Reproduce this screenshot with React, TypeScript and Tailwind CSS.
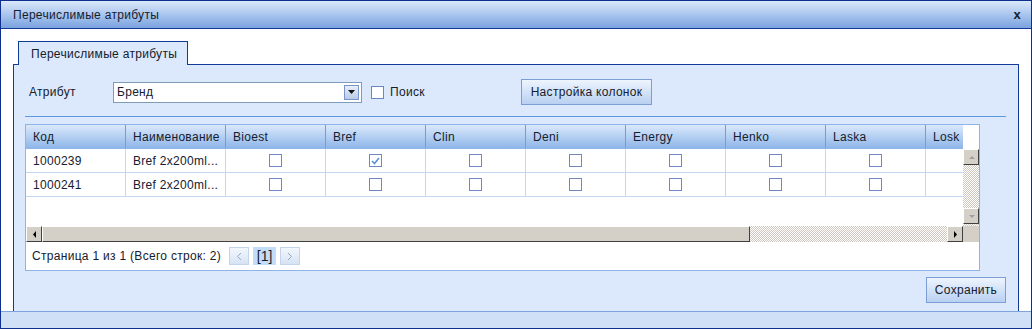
import React from "react";

const font = "font-['Tahoma','Liberation_Sans','DejaVu_Sans',sans-serif] tracking-[0.3px]";

const brands = ["Bioest", "Bref", "Clin", "Deni", "Energy", "Henko", "Laska", "Losk"];

const rows = [
  { code: "1000239", name: "Bref 2x200ml...", checked: "Bref" },
  { code: "1000241", name: "Bref 2x200ml...", checked: "" },
];

function Check({ on }: { on: boolean }) {
  return (
    <div className="w-[13px] h-[13px] border border-[#7088c4] bg-white flex items-center justify-center">
      {on && (
        <svg width="9" height="8" viewBox="0 0 9 8">
          <path d="M1 4 L3.5 6.5 L8 1" stroke="#5b8fe0" strokeWidth="1.6" fill="none" />
        </svg>
      )}
    </div>
  );
}

function ScrollBtn({ dir }: { dir: "up" | "down" | "left" | "right" }) {
  const pts = {
    up: "2,6 5,3 8,6",
    down: "2,3 5,6 8,3",
    left: "6,1 3,4.5 6,8",
    right: "3,1 6,4.5 3,8",
  }[dir];
  const dark = dir === "left" || dir === "right";
  return (
    <div className="w-[16px] h-[16px] shrink-0 bg-[#d4d0c8] border border-t-white border-l-white border-r-[#404040] border-b-[#404040] flex items-center justify-center">
      <svg width="9" height="9" viewBox="0 0 9 9">
        <polygon points={pts} fill={dark ? "#000" : "#a0a0a0"} />
      </svg>
    </div>
  );
}

const checker =
  "bg-[repeating-conic-gradient(#cdc9c1_0%_25%,#ffffff_0%_50%)] bg-[length:2px_2px]";

export default function App() {
  return (
    <div className={`${font} text-[12px] text-[#15202e] w-[1032px] h-[329px] flex flex-col border border-[#0e2f8e] bg-white`}>
      <div className="h-[28px] shrink-0 flex items-center justify-between pl-[12px] pr-[10px] border-b border-[#123a96] bg-gradient-to-b from-[#dbe9fb] to-[#7aa2df]">
        <span>Перечислимые атрибуты</span>
        <span className="font-bold text-[13px] leading-none">x</span>
      </div>

      <div className="flex-1 flex flex-col pt-[12px] px-[12px] min-h-0">
        <div className="relative z-10 -mb-px ml-[5px] w-[170px] h-[24px] border border-b-0 border-[#123a96] bg-[#dce9fc] pl-[12px] flex items-center">
          Перечислимые атрибуты
        </div>
        <div className="flex-1 border border-b-0 border-[#123a96] bg-[#dce9fc] pl-[11px] pr-[12px] flex flex-col">
          <div className="mt-[14px] h-[26px] flex items-center">
            <span className="pl-[4px] w-[88px]">Атрибут</span>
            <div className="w-[249px] h-[21px] border border-[#7f9db9] bg-white flex items-center justify-between pl-[3px] pr-[2px]">
              <span>Бренд</span>
              <div className="w-[15px] h-[15px] border border-[#7896ca] bg-gradient-to-b from-[#e8effa] to-[#b9cbe6] flex items-center justify-center">
                <svg width="7" height="4" viewBox="0 0 7 4">
                  <polygon points="0,0 7,0 3.5,4" fill="#111" />
                </svg>
              </div>
            </div>
            <div className="w-[159px] flex items-center pl-[9px]">
              <div className="w-[13px] h-[13px] border border-[#6c86c0] bg-white" />
              <span className="ml-[6px]">Поиск</span>
            </div>
            <button className="w-[131px] h-[26px] border border-[#7d9ed4] bg-gradient-to-b from-[#eef4fd] to-[#b9d0f2] flex items-center justify-center">
              Настройка колонок
            </button>
          </div>

          <div className="mt-[11px] h-px bg-[#5d99e2]" />

          <div className="mt-[7px] w-[955px] border border-[#8eb3e6] bg-white flex flex-col">
            <div className="flex h-[101px]">
              <div className="w-[937px] overflow-hidden flex flex-col">
                <div className="flex h-[24px] shrink-0 bg-gradient-to-b from-[#dbe9fb] to-[#8fb6e9] border-b border-[#8fb6e9]">
                  {["Код", "Наименование", ...brands].map((h) => (
                    <div key={h} className="w-[100px] shrink-0 pl-[7px] flex items-center border-r border-[#6aa0de]">
                      {h}
                    </div>
                  ))}
                </div>
                {rows.map((r) => (
                  <div key={r.code} className="flex h-[24px] shrink-0 border-b border-[#c3d7f1]">
                    <div className="w-[100px] shrink-0 pl-[7px] flex items-center border-r border-[#c3d7f1]">{r.code}</div>
                    <div className="w-[100px] shrink-0 pl-[7px] flex items-center border-r border-[#c3d7f1]">{r.name}</div>
                    {brands.map((b) => (
                      <div key={b} className="w-[100px] shrink-0 flex items-center justify-center border-r border-[#c3d7f1]">
                        {b !== "Losk" && <Check on={r.checked === b} />}
                      </div>
                    ))}
                  </div>
                ))}
              </div>
              <div className="w-[16px] flex flex-col">
                <div className="h-[24px] shrink-0" />
                <ScrollBtn dir="up" />
                <div className={`flex-1 ${checker}`} />
                <ScrollBtn dir="down" />
                <div className={`h-[2px] ${checker}`} />
              </div>
            </div>
            <div className="flex h-[16px]">
              <ScrollBtn dir="left" />
              <div className={`flex-1 flex ${checker}`}>
                <div className="w-[708px] h-full bg-[#d4d0c8] border border-t-white border-l-white border-r-[#404040] border-b-[#404040]" />
              </div>
              <ScrollBtn dir="right" />
              <div className="w-[16px] bg-[#d4d0c8]" />
            </div>
            <div className="h-[28px] flex items-center pl-[6px]">
              <span>Страница 1 из 1 (Всего строк: 2)</span>
              <div className="ml-[8px] w-[20px] h-[18px] border border-[#c4d3e8] bg-gradient-to-b from-[#f3f7fd] to-[#d6e3f5] flex items-center justify-center">
                <svg width="6" height="9" viewBox="0 0 6 9">
                  <path d="M5 1 L1.5 4.5 L5 8" stroke="#9aa7b8" fill="none" />
                </svg>
              </div>
              <div className="ml-[4px] w-[23px] h-[18px] bg-[#c3dcf8] flex items-center justify-center text-[14px] tracking-normal">
                [1]
              </div>
              <div className="ml-[4px] w-[20px] h-[18px] border border-[#c4d3e8] bg-gradient-to-b from-[#f3f7fd] to-[#d6e3f5] flex items-center justify-center">
                <svg width="6" height="9" viewBox="0 0 6 9">
                  <path d="M1 1 L4.5 4.5 L1 8" stroke="#9aa7b8" fill="none" />
                </svg>
              </div>
            </div>
          </div>

          <div className="mt-[6px] flex justify-end">
            <button className="w-[80px] h-[26px] border border-[#7d9ed4] bg-gradient-to-b from-[#eef4fd] to-[#b9d0f2] flex items-center justify-center">
              Сохранить
            </button>
          </div>
        </div>
      </div>

      <div className="h-[17px] shrink-0 border-t border-[#7ea3dc] bg-[#cfe0f7]" />
    </div>
  );
}
